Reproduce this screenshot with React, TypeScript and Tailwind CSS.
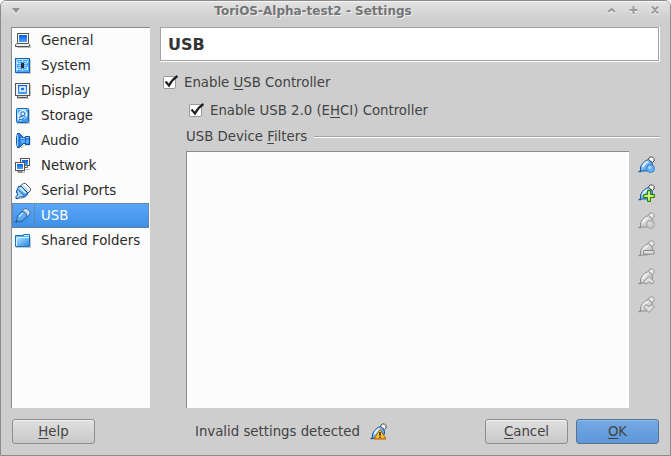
import type { ReactNode } from 'react';

const OUT = '#0a4f9c';

function Svg({ children, size = 18 }: { children: ReactNode; size?: number }) {
  return (
    <svg width={size} height={size} viewBox={`0 0 ${size} ${size}`} className="block shrink-0">
      {children}
    </svg>
  );
}

function Gradients() {
  return (
    <svg width="0" height="0" className="absolute">
      <defs>
        <linearGradient id="screen" x1="0" y1="0" x2="0" y2="1">
          <stop offset="0" stopColor="#0a5fdc" />
          <stop offset="1" stopColor="#4aa4ff" />
        </linearGradient>
        <linearGradient id="blue" x1="0" y1="0" x2="1" y2="1">
          <stop offset="0" stopColor="#b9e2ff" />
          <stop offset="1" stopColor="#2b8ae8" />
        </linearGradient>
        <linearGradient id="metal" x1="0" y1="0" x2="1" y2="1">
          <stop offset="0" stopColor="#ededed" />
          <stop offset="1" stopColor="#b8b8b8" />
        </linearGradient>
        <linearGradient id="warn" x1="0" y1="0" x2="0" y2="1">
          <stop offset="0" stopColor="#fff3a0" />
          <stop offset="1" stopColor="#ffab00" />
        </linearGradient>
      </defs>
    </svg>
  );
}

const GeneralIcon = () => (
  <Svg>
    <path d="M3 15.5h13.5v-2" stroke="#000" strokeOpacity=".25" fill="none" />
    <rect x="3.5" y="1.5" width="11" height="9" fill="#fff" stroke="#555" />
    <rect x="5" y="3" width="8" height="7" fill="url(#screen)" />
    <path d="M3.5 11.5h11l1 1v2h-14v-2z" fill="#eee" stroke="#555" />
    <path d="M4 10.500h10" stroke="#fff" />
  </Svg>
);

const SystemIcon = () => (
  <Svg>
    <path d="M2 16.5h14.5v-14" stroke="#000" strokeOpacity=".2" fill="none" />
    <rect x="1.5" y="1.5" width="14" height="14" fill="#4ba7f7" stroke="#1265b8" />
    <path d="M2.5 14.5v-12h12" stroke="#a7dcff" fill="none" />
    <path d="M5.500 4v9M11.500 4v9" stroke="#c9ebff" strokeDasharray="1 1" strokeWidth="2" />
    <path d="M8.5 3v2m0 7v2" stroke="#d8f1ff" />
    <path d="M3.5 5v2m10-3v2m0 4v3m-10-2v2" stroke="#eaf8ff" />
    <rect x="7" y="6" width="3" height="5" fill="#252b32" />
  </Svg>
);

const DisplayIcon = () => (
  <Svg>
    <path d="M3 16.5h12M16.5 3v11" stroke="#000" strokeOpacity=".22" />
    <path d="M3.5 13.5h10v2h-10z" fill="#ddd" stroke="#555" />
    <rect x="1.5" y="1.5" width="14" height="12" fill="#f4f4f4" stroke="#555" />
    <rect x="4" y="3" width="9" height="9" fill="url(#screen)" />
    <rect x="6" y="5" width="5" height="4" fill="#1d76ea" stroke="#fff" strokeWidth="1.5" />
  </Svg>
);

const StorageIcon = () => (
  <Svg>
    <path d="M3 16.5h12.5v-14" stroke="#000" strokeOpacity=".22" fill="none" />
    <rect x="2.5" y="1.5" width="12" height="14" rx="1" fill="#3d9cf0" stroke="#1265b8" />
    <path d="M3.5 14v-11.500h10" stroke="#a2d8ff" fill="none" />
    <path d="M4.500 8c0-3 2-5 4.500-5s4 2 4 4.500-2 4-4 4.500l-2 2-2.500-1.500z" fill="#b9e1ff" stroke="#eefaff" />
    <path d="M5 12.5l3 .5 3.500-4M5.500 11c0-2 3-1 4-3" stroke="#0b5cb4" fill="none" />
    <circle cx="8.800" cy="6.800" r="2" fill="#e5f5ff" stroke="#1763b3" />
  </Svg>
);

const AudioIcon = () => (
  <Svg>
    <path d="M7 16l4-3h5V6" stroke="#000" strokeOpacity=".25" fill="none" />
    <path d="M3.500 1.500h2l4 4h2v-1h4v8h-4v-1h-2l-4 4h-2l-1-4v-6z" fill="#2f86ea" stroke={OUT} />
    <path d="M3.500 3v11" stroke="#9bd6ff" />
    <path d="M5.500 3v11" stroke="#2a6fc0" />
    <path d="M7 6.500h4.500v-1H15" stroke="#8ccaff" fill="none" />
    <path d="M7 8h8v3H7z" fill="#5aadf8" />
    <path d="M11.500 5v7" stroke="#1c66b9" />
  </Svg>
);

const NetworkIcon = () => (
  <Svg>
    <path d="M4 15.5h6.5v-3h5" stroke="#000" strokeOpacity=".25" fill="none" />
    <rect x="6.5" y="1.5" width="9" height="7" fill="#fff" stroke="#555" />
    <rect x="8" y="3" width="6" height="5" fill="url(#screen)" />
    <path d="M9.5 8.5h4v2h-4z" fill="#eee" stroke="#666" />
    <rect x="1.5" y="5.500" width="9" height="8" fill="#fff" stroke="#555" />
    <rect x="3" y="7" width="6" height="5" fill="url(#screen)" />
    <path d="M4 13.5h4v1.500h-4z" fill="#eee" stroke="#555" />
  </Svg>
);

const SerialIcon = () => (
  <Svg>
    <path d="M4 16.5h4l3-2 5-5" stroke="#000" strokeOpacity=".25" fill="none" />
    <path d="M6.500 3.500l3-2h2l5 5v2l-3 3z" fill="#f2f9ff" stroke="#555" />
    <path d="M8.500 3l6 6" stroke="#8fbce6" />
    <path d="M4.500 4.500h3l6 6v2l-3 2.500h-3l-5-5z" fill="url(#blue)" stroke={OUT} />
    <path d="M2.500 8.500l1.500-1 6 6-1.500 1.500h-3l-1.500 1.500h-2v-2l1.500-1.500z" fill="#9ed4ff" stroke={OUT} />
    <path d="M6.500 6l5 5" stroke="#dff3ff" strokeWidth="1.500" />
  </Svg>
);

const UsbIcon = () => (
  <Svg>
    <path d="M5 15.500l4-1 7-7" stroke="#053d7c" strokeOpacity=".3" fill="none" />
    <path d="M1.500 15.500l3-3" stroke="#365f8c" strokeWidth="2" />
    <path d="M10.500 1.500h2.500l3 3v2.500L13 10 7.500 4.500z" fill="#b5cfea" stroke="#52769d" />
    <path d="M3.500 9L8 4.500c2.500 0 5 2.500 5 5L8.500 13.500c-1.500 1-3.500 1-5 .5-.8-1.500-1-3.500 0-5z" fill="#5cabf0" stroke="#2a639f" />
    <path d="M5 9.500l4-3.500M11.500 3l3 3" stroke="#c9e9ff" strokeWidth="1.500" />
  </Svg>
);

const FolderIcon = () => (
  <Svg>
    <path d="M2 15.500h14.500V5" stroke="#000" strokeOpacity=".2" fill="none" />
    <path d="M1.500 14.500v-11h8v-1h6v12z" fill="#4eb2f4" stroke="#1673bd" />
    <path d="M10 3.500h5" stroke="#d2f1ff" />
    <path d="M2 5.500h13v8.500h-13z" fill="url(#blue)" />
    <path d="M2.500 14v-8.500h12.500" stroke="#d2f1ff" fill="none" />
  </Svg>
);

type Badge = 'dot' | 'plus' | 'minus' | 'up' | 'down' | 'warning';

function FilterIcon({ badge, muted = false }: { badge: Badge; muted?: boolean }) {
  const line = muted ? '#8e8e8e' : '#1d5796';
  const fill = muted ? 'url(#metal)' : 'url(#blue)';
  const shine = muted ? '#efefef' : '#e8f6ff';
  return (
    <Svg>
      <path d="M.5 15.500h2l1-2" stroke={line} strokeWidth="1.500" fill="none" />
      <path d="M2.500 14.500V11L4.500 7.500 8 4.500l2.500-1c2 .5 3.500 2.500 4 5V11L12 13.500 8.500 15H3.500z" fill={fill} stroke={line} />
      <path d="M4.500 11L6.500 8 9.500 5.500" stroke={shine} strokeWidth="2" fill="none" />
      <path d="M10.500 3.500l.5-1.500 1.500-1h2l1.500 1.500v2.500l-1.500 1.500z" fill={muted ? '#e8e8e8' : '#fff'} stroke={muted ? '#929292' : '#444'} />
      {badge === 'dot' && (
        <>
          <circle cx="12.500" cy="12.500" r="4" fill={muted ? '#c8c8c8' : '#65b0f8'} stroke={muted ? '#a4a4a4' : '#3e7ec4'} />
          <circle cx="11.700" cy="11.500" r="1.800" fill={muted ? '#dedede' : '#9bd0ff'} />
        </>
      )}
      {badge === 'plus' && (
        <>
          <path d="M9.500 6.500h3v4h4v3h-4v4h-3v-4h-4v-3h4z" fill="#9edc2f" stroke="#287f10" />
          <path d="M11 8v8m-4-4h8" stroke="#f0ffb3" />
        </>
      )}
      {badge === 'minus' && <path d="M5.500 10.500h10.500v3.500H5.500z" fill="#dfdfdf" stroke="#8a8a8a" />}
      {badge === 'up' && <path d="M11 8.500l5.200 5-2 2.500-3.200-2-3.300 2-2-2.500z" fill="#dedede" stroke="#929292" />}
      {badge === 'down' && <path d="M7.700 8.500l3.300 2 3.200-2 2 2.500-5.200 5.500L5.700 11z" fill="#dedede" stroke="#929292" />}
      {badge === 'warning' && (
        <>
          <path d="M10 6.500l6 9.500H4z" fill="url(#warn)" stroke="#b35b00" strokeLinejoin="round" />
          <path d="M10 9v3.700m0 1v1.400" stroke="#321c00" strokeWidth="1.500" />
        </>
      )}
    </Svg>
  );
}

const categories = [
  { name: 'General', Icon: GeneralIcon },
  { name: 'System', Icon: SystemIcon },
  { name: 'Display', Icon: DisplayIcon },
  { name: 'Storage', Icon: StorageIcon },
  { name: 'Audio', Icon: AudioIcon },
  { name: 'Network', Icon: NetworkIcon },
  { name: 'Serial Ports', Icon: SerialIcon },
  { name: 'USB', Icon: UsbIcon },
  { name: 'Shared Folders', Icon: FolderIcon },
];

function Key({ children }: { children: ReactNode }) {
  return <span className="underline decoration-1 underline-offset-2 [text-decoration-skip-ink:none]">{children}</span>;
}

function Check({ children }: { children: ReactNode }) {
  return (
    <label className="flex h-[17px] items-center gap-2">
      <span className="h-[13px] w-[13px] rounded-[2px] border border-[#999] bg-white">
        <svg width="16" height="14" viewBox="0 0 16 14" className="-mt-0.5 block max-w-none overflow-visible">
          <path d="M1.500 6.500l3.500 4C7 6.500 9.500 3.500 13.500 1" fill="none" stroke="#222" strokeWidth="2.200" />
        </svg>
      </span>
      <span className="whitespace-nowrap">{children}</span>
    </label>
  );
}

function Button({ children, primary = false }: { children: ReactNode; primary?: boolean }) {
  return (
    <button
      className={`h-[25px] w-[83px] rounded-[3px] border leading-[23px] ${
        primary
          ? 'border-[#59738f] bg-linear-to-b from-[#75a9e4] to-[#5c97d8] shadow-[inset_0_1px_0_#8dbcf0]'
          : 'border-[#8e8e8e] bg-linear-to-b from-[#e0e0e0] to-[#c9c9c9] shadow-[inset_0_1px_0_#f3f3f3]'
      }`}
    >
      {children}
    </button>
  );
}

export default function App() {
  return (
    <div className="h-[456px] w-[671px] overflow-hidden bg-white font-['DejaVu_Sans',sans-serif] text-[13.3px] leading-[17px] text-[#434343]">
      <Gradients />
      <div className="flex h-full flex-col rounded-t-[6px] border border-[#8b8b8b] bg-[#cecece]">
        <header className="flex h-[26px] shrink-0 items-start rounded-t-[5px] border-t border-[#f5f5f5] bg-linear-to-b from-[#e2e2e2] to-[#cecece] to-70% pr-2.5 pl-[11px]">
          <svg width="9" height="7" className="mt-1.5 block">
            <path d="M0 0h8L4 5z" fill="#939393" />
            <path d="M1 2l3 4 4-4" fill="none" stroke="#f3f3f3" strokeWidth=".7" />
          </svg>
          <h1 className="flex-1 pt-px pr-px text-center text-[12px] leading-[16px] font-bold text-[#757575] [text-shadow:1px_1px_0_#eee]">
            ToriOS-Alpha-test2 - Settings
          </h1>
          <svg width="54" height="14" className="mt-0.5 block" fill="none" strokeWidth="2">
            <g stroke="#f4f4f4" transform="translate(0 1)">
              <path d="M2 8l3.500-3L9 8M23.500 6h8M27.500 2v8M46 2.500l6 7m0-7l-6 7" />
            </g>
            <path d="M2 8l3.500-3L9 8M23.500 6h8M27.500 2v8M46 2.500l6 7m0-7l-6 7" stroke="#9b9b9b" />
          </svg>
        </header>

        <main className="flex h-[381px] shrink-0 pr-2.5 pl-2.5">
          <ul className="w-[139px] shrink-0 border-t border-l border-[#8c8c8c] bg-[#fcfcfc] text-[#2b2b2b]">
            {categories.map(({ name, Icon }) => (
              <li
                key={name}
                className={`mr-px flex h-[25px] items-center ${
                  name === 'USB'
                    ? 'bg-linear-to-b from-[#5ba8fa] to-[#3d8fe8] text-white outline-1 -outline-offset-1 outline-dotted outline-[#77736c]'
                    : ''
                }`}
              >
                <span className={`flex h-full w-[23px] items-center pl-0.5 ${name === 'USB' ? 'border-r border-dotted border-[#77736c]' : ''}`}>
                  <Icon />
                </span>
                <span className="pl-1.5 whitespace-nowrap">{name}</span>
              </li>
            ))}
          </ul>

          <section className="ml-2.5 flex min-w-0 flex-1 flex-col">
            <div className="h-[35px] shrink-0 border-r border-b border-white">
              <h2 className="h-[34px] border border-[#a3a3a3] bg-white pl-[7px] text-[16px] leading-[33px] font-bold text-[#333]">USB</h2>
            </div>
            <div className="mt-3 pl-[3px]">
              <Check>
                Enable <Key>U</Key>SB Controller
              </Check>
            </div>
            <div className="mt-[11px] pl-[29px]">
              <Check>
                Enable USB 2.0 (E<Key>H</Key>CI) Controller
              </Check>
            </div>
            <div className="mt-[9px] flex h-[17px] items-center pl-[26px]">
              <h3>
                USB Device <Key>F</Key>ilters
              </h3>
              <div className="ml-[7px] h-0.5 flex-1 border-t border-b border-t-[#a4a4a4] border-b-white" />
            </div>
            <div className="mt-1.5 flex flex-1 pl-[26px]">
              <div className="w-[443px] border-t border-l border-[#8c8c8c] bg-[#fcfcfc]" />
              <div className="ml-[9px] flex flex-col gap-2.5 pt-[5px]">
                <FilterIcon badge="dot" />
                <FilterIcon badge="plus" />
                <FilterIcon badge="dot" muted />
                <FilterIcon badge="minus" muted />
                <FilterIcon badge="up" muted />
                <FilterIcon badge="down" muted />
              </div>
            </div>
          </section>
        </main>

        <footer className="mt-[11px] flex h-[25px] shrink-0 items-center px-[11px]">
          <Button>
            <Key>H</Key>elp
          </Button>
          <span className="ml-[100px] w-[175px] whitespace-nowrap">Invalid settings detected</span>
          <FilterIcon badge="warning" />
          <div className="ml-auto flex gap-2">
            <Button>
              <Key>C</Key>ancel
            </Button>
            <Button primary>
              <Key>O</Key>K
            </Button>
          </div>
        </footer>
      </div>
    </div>
  );
}
